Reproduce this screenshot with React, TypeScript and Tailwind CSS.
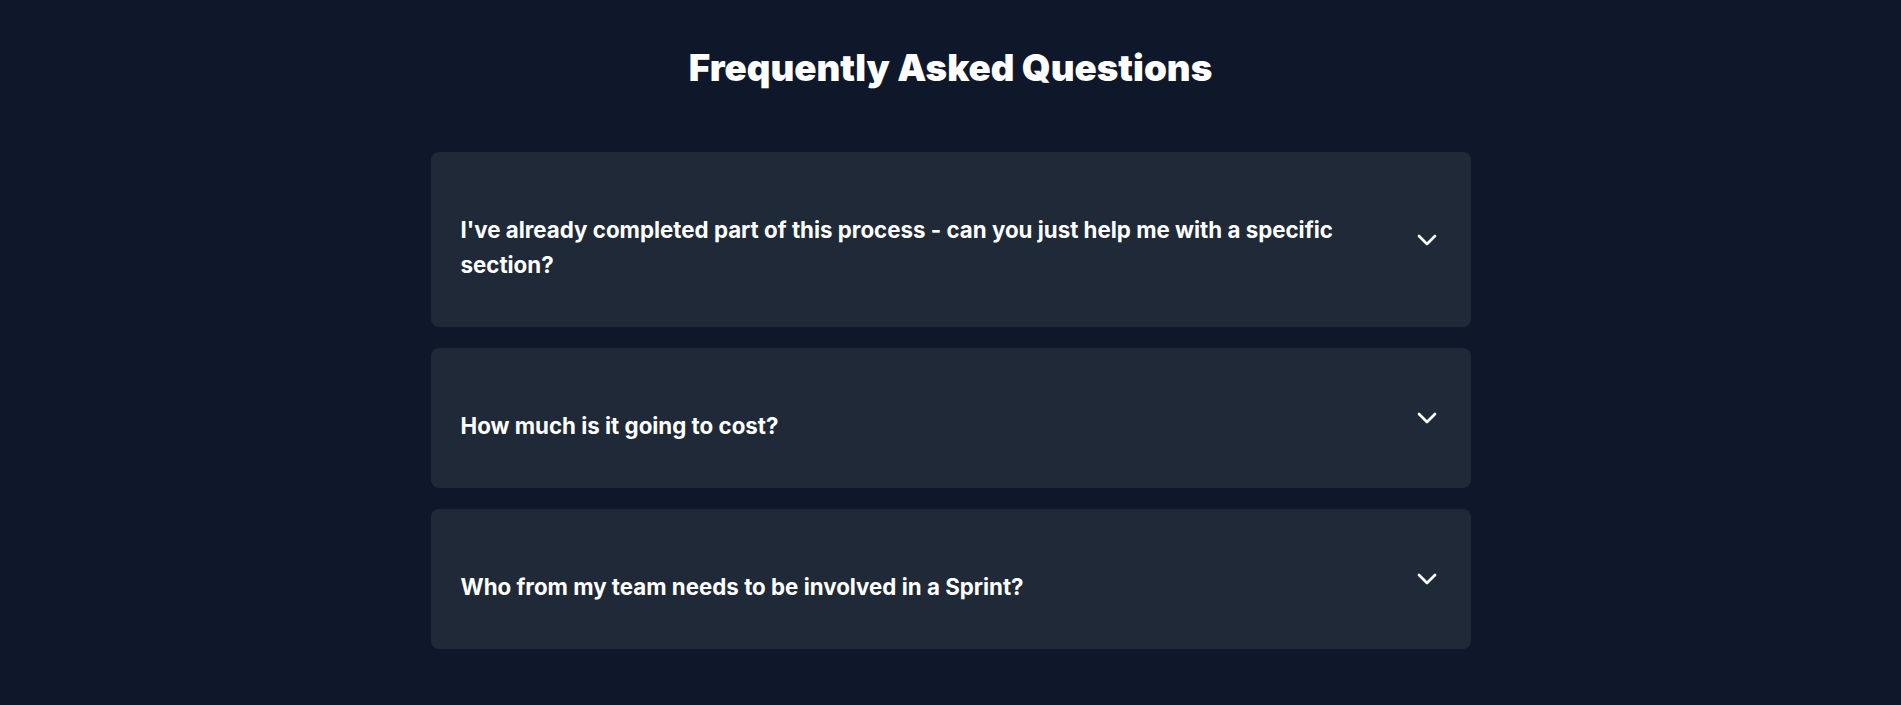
import React from 'react';
import { ChevronDown } from 'lucide-react';

export default function App() {
  const faqs = [
    "I've already completed part of this process - can you just help me with a specific section?",
    'How much is it going to cost?',
    'Who from my team needs to be involved in a Sprint?',
  ];

  return (
    <section className="min-h-screen bg-[#0f172a] pt-12 pb-14 px-4 font-['Inter',sans-serif]">
      <h2 className="text-center text-[36.7px] leading-10 font-black text-white mb-16">
        Frequently Asked Questions
      </h2>
      <div className="mx-auto w-full max-w-[1040px] flex flex-col gap-[21px]">
        {faqs.map((q, i) => (
          <div key={i} className="rounded-lg bg-[#1f2937]">
            <button className="w-full flex items-center justify-between gap-4 pl-[30px] pr-7 py-[45px] text-left">
              <span className="pt-[15px] text-[22.3px] leading-[35px] font-bold text-white">{q}</span>
              <ChevronDown className="shrink-0 text-white" size={32} strokeWidth={2} />
            </button>
          </div>
        ))}
      </div>
    </section>
  );
}
